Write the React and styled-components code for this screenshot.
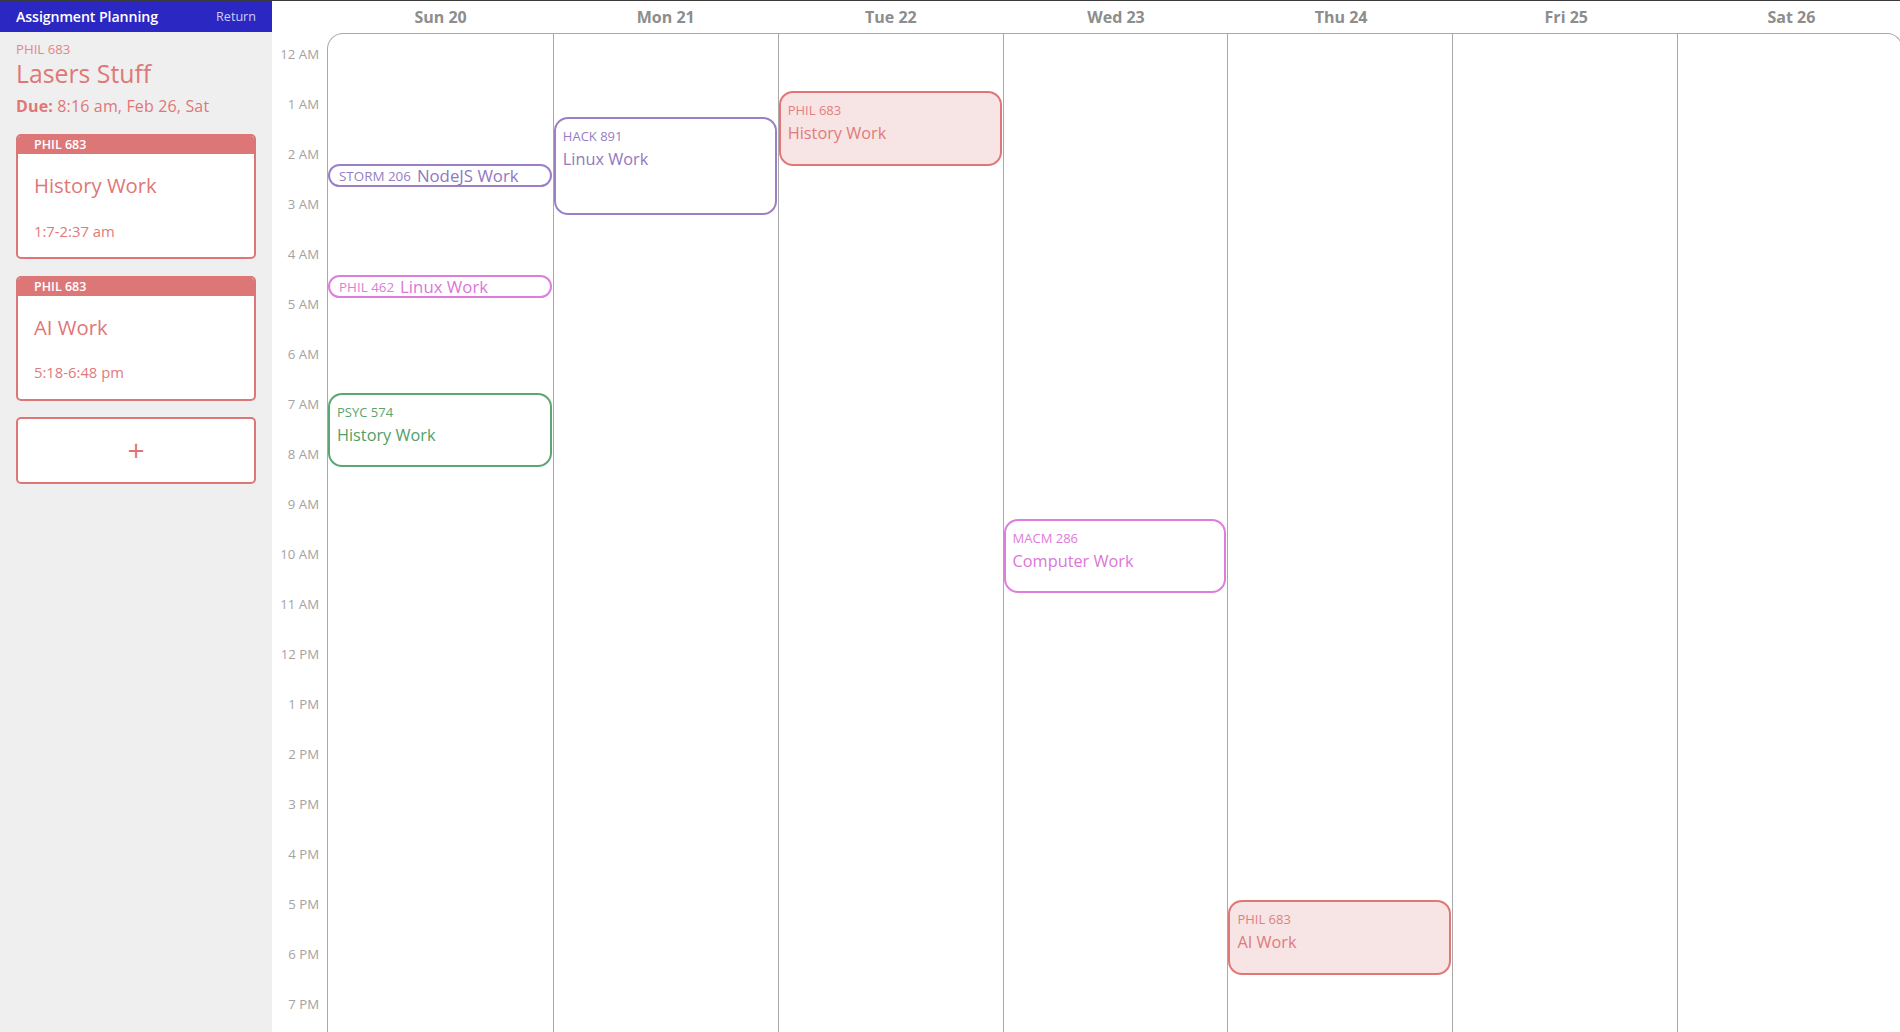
import React from "react";
import styled, { createGlobalStyle, css } from "styled-components";

const FONT = `"Open Sans", "Noto Sans", "Liberation Sans", sans-serif`;
const HOUR_PX = 50;

const GlobalStyle = createGlobalStyle`
  * { box-sizing: border-box; }
  html, body { margin: 0; padding: 0; background: #ffffff; }
  body { font-family: ${FONT}; overflow: hidden; }
`;

const palette = {
  red: { border: "#e07676", text: "#e07b7b", bg: "#f7e4e5" },
  purple: { border: "#9b80c6", text: "#9178c0", bg: "#ffffff" },
  pink: { border: "#df7ddc", text: "#dc76d7", bg: "#ffffff" },
  green: { border: "#5ba773", text: "#52a067", bg: "#ffffff" },
};

const SALMON = "#dd7777";

/* ---------- shell ---------- */

const Shell = styled.div`
  display: flex;
  height: 100vh;
  border-top: 1px solid #3b3b3b;
  overflow: hidden;
`;

/* ---------- sidebar ---------- */

const Sidebar = styled.aside`
  width: 272px;
  flex: none;
  background: #efefef;
  display: flex;
  flex-direction: column;
`;

const SideHeader = styled.header`
  height: 31px;
  background: #2b27c3;
  display: flex;
  align-items: center;
  justify-content: space-between;
  padding: 0 16px 0 16px;
`;

const AppTitle = styled.span`
  color: #ffffff;
  font-size: 14.2px;
  font-weight: 600;
  letter-spacing: -0.1px;
`;

const ReturnLink = styled.span`
  color: #cfcdf3;
  font-size: 12.6px;
`;

const SideBody = styled.div`
  padding: 8px 16px 0 16px;
  display: flex;
  flex-direction: column;
  color: ${SALMON};
`;

const CourseCode = styled.div`
  font-size: 13.2px;
  line-height: 18px;
  color: #e58686;
`;

const AssignmentName = styled.div`
  font-size: 24.8px;
  line-height: 30px;
  color: #e07777;
`;

const DueLine = styled.div`
  margin-top: 7px;
  font-size: 16px;
  line-height: 22px;
  letter-spacing: 0.15px;
  color: #e07777;
  b { font-weight: 700; }
`;

const CardList = styled.div`
  margin-top: 17px;
  display: flex;
  flex-direction: column;
  gap: 16.5px;
`;

const Card = styled.div`
  border: 2px solid ${SALMON};
  border-radius: 5px;
  background: #ffffff;
  overflow: hidden;
`;

const CardHeader = styled.div`
  height: 18px;
  background: ${SALMON};
  color: #ffffff;
  font-size: 12.5px;
  line-height: 18px;
  font-weight: 600;
  padding-left: 16px;
`;

const CardBody = styled.div`
  padding: 17px 16px 16.5px 16px;
  display: flex;
  flex-direction: column;
  gap: 21.5px;
`;

const CardTitle = styled.div`
  font-size: 20.3px;
  line-height: 28px;
  color: #e07777;
`;

const CardTime = styled.div`
  font-size: 14.8px;
  line-height: 20px;
  color: #e07b7b;
`;

const AddCard = styled.button`
  height: 67px;
  border: 2px solid ${SALMON};
  border-radius: 5px;
  background: #ffffff;
  color: ${SALMON};
  font-family: ${FONT};
  font-size: 30px;
  font-weight: 400;
  line-height: 1;
  display: flex;
  align-items: center;
  justify-content: center;
  padding: 0 0 2px 0;
  cursor: pointer;
`;

/* ---------- calendar ---------- */

const Main = styled.main`
  flex: 1;
  min-width: 0;
  display: flex;
  flex-direction: column;
  overflow: hidden;
`;

const DayHeaderRow = styled.div`
  height: 32px;
  flex: none;
  display: grid;
  grid-template-columns: repeat(7, 1fr);
  margin-left: 56px;
  margin-right: -4px;
  align-items: center;
`;

const DayName = styled.div`
  text-align: center;
  font-size: 16px;
  font-weight: 700;
  color: #8d8d8d;
  padding-bottom: 1px;
`;

const Body = styled.div`
  display: flex;
  align-items: flex-start;
`;

const HourColumn = styled.div`
  width: 55px;
  flex: none;
  padding-top: 1px;
`;

const HourLabel = styled.div`
  height: ${HOUR_PX}px;
  padding: 11.5px 8px 0 0;
  text-align: right;
  font-size: 13.2px;
  line-height: 16px;
  color: #a3a3a3;
  white-space: nowrap;
`;

const DayGrid = styled.div`
  flex: 1;
  margin-right: -3px;
  display: grid;
  grid-template-columns: repeat(7, 1fr);
  border: 1px solid #a9a9a9;
  border-bottom: none;
  border-radius: 16px 16px 0 0;
  height: ${24 * HOUR_PX + 1}px;
  overflow: hidden;
`;

const DayColumn = styled.div`
  position: relative;
  border-left: ${(p) => (p.$first ? "none" : "1px solid #a9a9a9")};
`;

const EventBox = styled.div`
  position: absolute;
  left: 0;
  right: 1px;
  border: 2px solid ${(p) => palette[p.$tone].border};
  background: ${(p) => palette[p.$tone].bg};
  color: ${(p) => palette[p.$tone].text};
  overflow: hidden;
  ${(p) =>
    p.$compact
      ? css`
          border-radius: 13px;
          display: flex;
          align-items: center;
          gap: 6px;
          padding: 0 9px;
        `
      : css`
          border-radius: 14px;
          display: flex;
          flex-direction: column;
          padding: 8px 7px;
        `}
`;

const EventCode = styled.span`
  font-size: ${(p) => (p.$compact ? "13.4px" : "13px")};
  line-height: 18px;
  white-space: nowrap;
  opacity: 0.95;
`;

const EventTitle = styled.span`
  font-size: ${(p) => (p.$compact ? "16.8px" : "16.3px")};
  line-height: 22px;
  white-space: nowrap;
  margin-top: ${(p) => (p.$compact ? "1px" : "3px")};
`;

const days = ["Sun 20", "Mon 21", "Tue 22", "Wed 23", "Thu 24", "Fri 25", "Sat 26"];

const hours = Array.from({ length: 24 }, (_, h) => {
  const suffix = h < 12 ? "AM" : "PM";
  const n = h % 12 === 0 ? 12 : h % 12;
  return `${n} ${suffix}`;
});

const t = (h, m) => h * 60 + m;

const events = [
  { day: 0, code: "STORM 206", title: "NodeJS Work", start: t(2, 35), end: t(3, 3), tone: "purple" },
  { day: 0, code: "PHIL 462", title: "Linux Work", start: t(4, 48), end: t(5, 16), tone: "pink" },
  { day: 0, code: "PSYC 574", title: "History Work", start: t(7, 10), end: t(8, 38), tone: "green" },
  { day: 1, code: "HACK 891", title: "Linux Work", start: t(1, 38), end: t(3, 36), tone: "purple" },
  { day: 2, code: "PHIL 683", title: "History Work", start: t(1, 7), end: t(2, 37), tone: "red" },
  { day: 3, code: "MACM 286", title: "Computer Work", start: t(9, 41), end: t(11, 10), tone: "pink" },
  { day: 4, code: "PHIL 683", title: "AI Work", start: t(17, 18), end: t(18, 48), tone: "red" },
];

const workBlocks = [
  { code: "PHIL 683", title: "History Work", time: "1:7-2:37 am" },
  { code: "PHIL 683", title: "AI Work", time: "5:18-6:48 pm" },
];

function CalendarEvent({ ev }) {
  const top = (ev.start / 60) * HOUR_PX + 1;
  const height = ((ev.end - ev.start) / 60) * HOUR_PX;
  const compact = height < 40;
  return (
    <EventBox $tone={ev.tone} $compact={compact} style={{ top, height }}>
      <EventCode $compact={compact}>{ev.code}</EventCode>
      <EventTitle $compact={compact}>{ev.title}</EventTitle>
    </EventBox>
  );
}

export default function App() {
  return (
    <>
      <GlobalStyle />
      <Shell>
        <Sidebar>
          <SideHeader>
            <AppTitle>Assignment Planning</AppTitle>
            <ReturnLink>Return</ReturnLink>
          </SideHeader>
          <SideBody>
            <CourseCode>PHIL 683</CourseCode>
            <AssignmentName>Lasers Stuff</AssignmentName>
            <DueLine>
              <b>Due:</b> 8:16 am, Feb 26, Sat
            </DueLine>
            <CardList>
              {workBlocks.map((w, i) => (
                <Card key={i}>
                  <CardHeader>{w.code}</CardHeader>
                  <CardBody>
                    <CardTitle>{w.title}</CardTitle>
                    <CardTime>{w.time}</CardTime>
                  </CardBody>
                </Card>
              ))}
              <AddCard type="button">+</AddCard>
            </CardList>
          </SideBody>
        </Sidebar>

        <Main>
          <DayHeaderRow>
            {days.map((d) => (
              <DayName key={d}>{d}</DayName>
            ))}
          </DayHeaderRow>
          <Body>
            <HourColumn>
              {hours.map((h) => (
                <HourLabel key={h}>{h}</HourLabel>
              ))}
            </HourColumn>
            <DayGrid>
              {days.map((d, i) => (
                <DayColumn key={d} $first={i === 0}>
                  {events
                    .filter((e) => e.day === i)
                    .map((e, k) => (
                      <CalendarEvent key={k} ev={e} />
                    ))}
                </DayColumn>
              ))}
            </DayGrid>
          </Body>
        </Main>
      </Shell>
    </>
  );
}
